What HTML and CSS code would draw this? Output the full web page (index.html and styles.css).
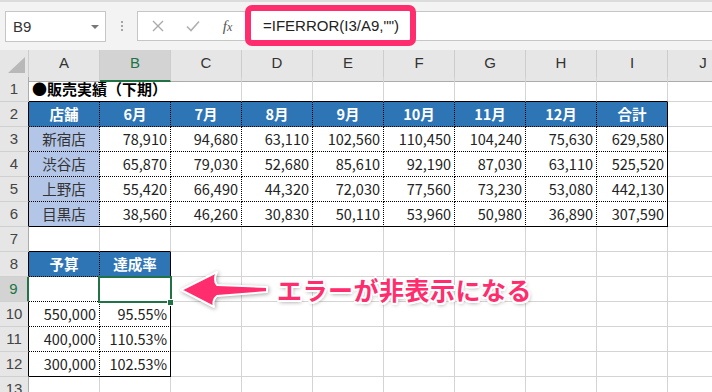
FILE: index.html
```html
<!DOCTYPE html>
<html>
  <head>
    <meta charset="utf-8" />
    <title>IFERROR</title>
    <link rel="stylesheet" href="styles.css">
  </head>

  <body>
    <!-- Formula bar -->
    <div class="toolbar">
      <div class="namebox"><span>B9</span><span class="caret"></span></div>
      <div class="grip"><i></i><i></i><i></i></div>
      <div class="formulabar">
        <span class="fbtn">
          <svg width="12" height="12" viewBox="0 0 12 12"><path d="M1 1L11 11M11 1L1 11" stroke="#aaa" stroke-width="1.4" fill="none"/></svg>
        </span>
        <span class="fbtn">
          <svg width="14" height="12" viewBox="0 0 14 12"><path d="M1 6.5L5 10.5L13 1.5" stroke="#b0b0b0" stroke-width="1.6" fill="none"/></svg>
        </span>
        <span class="fbtn fx"><i>f</i><i class="sub">x</i></span>
        <div class="formula">=IFERROR(I3/A9,"")</div>
      </div>
    </div>

    <!-- Sheet -->
    <div class="sheet">
      <div class="row colhead">
        <div class="corner">
          <svg width="28" height="26" viewBox="0 0 28 26"><polygon points="8,23 25,23 25,7" fill="#b8b8b8"/></svg>
        </div>
        <div class="ch">A</div>
        <div class="ch sel">B</div>
        <div class="ch">C</div>
        <div class="ch">D</div>
        <div class="ch">E</div>
        <div class="ch">F</div>
        <div class="ch">G</div>
        <div class="ch">H</div>
        <div class="ch">I</div>
        <div class="ch">J</div>
      </div>

      <div class="row">
        <div class="rh">1</div>
        <div class="c title tb">●販売実績（下期）</div>
        <div class="c tb"></div><div class="c tb"></div><div class="c tb"></div>
        <div class="c tb"></div><div class="c tb"></div><div class="c tb"></div>
        <div class="c"></div>
      </div>

      <div class="row">
        <div class="rh le">2</div>
        <div class="c hd dt">店舗</div>
        <div class="c hd dt">6月</div>
        <div class="c hd dt">7月</div>
        <div class="c hd dt">8月</div>
        <div class="c hd dt">9月</div>
        <div class="c hd dt">10月</div>
        <div class="c hd dt">11月</div>
        <div class="c hd dt">12月</div>
        <div class="c hd dt re">合計</div>
        <div class="c"></div>
      </div>

      <div class="row">
        <div class="rh le">3</div>
        <div class="c st dt">新宿店</div>
        <div class="c n dt">78,910</div>
        <div class="c n dt">94,680</div>
        <div class="c n dt">63,110</div>
        <div class="c n dt">102,560</div>
        <div class="c n dt">110,450</div>
        <div class="c n dt">104,240</div>
        <div class="c n dt">75,630</div>
        <div class="c n dt re">629,580</div>
        <div class="c"></div>
      </div>

      <div class="row">
        <div class="rh le">4</div>
        <div class="c st dt">渋谷店</div>
        <div class="c n dt">65,870</div>
        <div class="c n dt">79,030</div>
        <div class="c n dt">52,680</div>
        <div class="c n dt">85,610</div>
        <div class="c n dt">92,190</div>
        <div class="c n dt">87,030</div>
        <div class="c n dt">63,110</div>
        <div class="c n dt re">525,520</div>
        <div class="c"></div>
      </div>

      <div class="row">
        <div class="rh le">5</div>
        <div class="c st dt">上野店</div>
        <div class="c n dt">55,420</div>
        <div class="c n dt">66,490</div>
        <div class="c n dt">44,320</div>
        <div class="c n dt">72,030</div>
        <div class="c n dt">77,560</div>
        <div class="c n dt">73,230</div>
        <div class="c n dt">53,080</div>
        <div class="c n dt re">442,130</div>
        <div class="c"></div>
      </div>

      <div class="row">
        <div class="rh le">6</div>
        <div class="c st dt be">目黒店</div>
        <div class="c n dt be">38,560</div>
        <div class="c n dt be">46,260</div>
        <div class="c n dt be">30,830</div>
        <div class="c n dt be">50,110</div>
        <div class="c n dt be">53,960</div>
        <div class="c n dt be">50,980</div>
        <div class="c n dt be">36,890</div>
        <div class="c n dt re be">307,590</div>
        <div class="c"></div>
      </div>

      <div class="row">
        <div class="rh">7</div>
        <div class="c tb"></div><div class="c tb"></div>
        <div class="c"></div><div class="c"></div><div class="c"></div><div class="c"></div>
        <div class="c"></div><div class="c"></div><div class="c"></div><div class="c"></div>
      </div>

      <div class="row">
        <div class="rh le">8</div>
        <div class="c hd dt">予算</div>
        <div class="c hd dt re">達成率</div>
        <div class="c"></div><div class="c"></div><div class="c"></div><div class="c"></div>
        <div class="c"></div><div class="c"></div><div class="c"></div><div class="c"></div>
      </div>

      <div class="row">
        <div class="rh sel">9</div>
        <div class="c dt"></div>
        <div class="c dt re"></div>
        <div class="c"></div><div class="c"></div><div class="c"></div><div class="c"></div>
        <div class="c"></div><div class="c"></div><div class="c"></div><div class="c"></div>
      </div>

      <div class="row">
        <div class="rh le">10</div>
        <div class="c n dt">550,000</div>
        <div class="c n dt re">95.55%</div>
        <div class="c"></div><div class="c"></div><div class="c"></div><div class="c"></div>
        <div class="c"></div><div class="c"></div><div class="c"></div><div class="c"></div>
      </div>

      <div class="row">
        <div class="rh le">11</div>
        <div class="c n dt">400,000</div>
        <div class="c n dt re">110.53%</div>
        <div class="c"></div><div class="c"></div><div class="c"></div><div class="c"></div>
        <div class="c"></div><div class="c"></div><div class="c"></div><div class="c"></div>
      </div>

      <div class="row">
        <div class="rh le">12</div>
        <div class="c n dt be">300,000</div>
        <div class="c n dt re be">102.53%</div>
        <div class="c"></div><div class="c"></div><div class="c"></div><div class="c"></div>
        <div class="c"></div><div class="c"></div><div class="c"></div><div class="c"></div>
      </div>

      <div class="row">
        <div class="rh">13</div>
        <div class="c"></div><div class="c"></div><div class="c"></div><div class="c"></div><div class="c"></div>
        <div class="c"></div><div class="c"></div><div class="c"></div><div class="c"></div><div class="c"></div>
      </div>
    </div>

    <!-- Active cell B9 -->
    <div class="selection"><span class="handle"></span></div>

    <!-- Annotation -->
    <svg class="arrow" width="110" height="60" viewBox="170 260 110 60">
      <path d="M181 290 L217 272 Q213 280 217 285 L267 287 L267 292 L217 296 Q212 300 214 307 Z" fill="#ff2d6e" stroke="#fff" stroke-width="2" stroke-linejoin="round"/>
    </svg>
    <div class="callout">エラーが非表示になる</div>
  </body>
</html>
```

FILE: styles.css
```css
* {
  box-sizing: border-box;
}

body,
html {
  margin: 0;
  padding: 0;
}

body {
  width: 712px;
  height: 392px;
  overflow: hidden;
  background: #fff;
  font-family: "Noto Sans CJK JP", sans-serif;
  color: #222;
}

/* Formula bar */
.toolbar {
  height: 50px;
  display: flex;
  align-items: flex-start;
  padding: 9px 0 0 5px;
  background: #f3f3f3;
  border-top: 2px solid #dcdcdc;
}

.namebox {
  width: 101px;
  height: 31px;
  display: flex;
  align-items: center;
  justify-content: space-between;
  padding: 0 6px 0 7px;
  background: #fff;
  border: 1px solid #c6c6c6;
  font: 15px "Liberation Sans", sans-serif;
  color: #333;
}

.caret {
  width: 0;
  height: 0;
  border-left: 4px solid transparent;
  border-right: 4px solid transparent;
  border-top: 4px solid #777;
}

.grip {
  width: 31px;
  display: flex;
  flex-direction: column;
  align-items: center;
  gap: 2px;
  padding-top: 10px;
}

.grip i {
  width: 2px;
  height: 2px;
  background: #a5a5a5;
}

.formulabar {
  flex: 1;
  height: 30px;
  display: flex;
  padding-left: 2px;
  margin-right: -4px;
  background: #fff;
  border: 1px solid #c6c6c6;
}

.fbtn {
  width: 35px;
  display: flex;
  align-items: center;
  justify-content: center;
}

.fx {
  font: italic 15px "Liberation Serif", serif;
  color: #555;
}

.fx .sub {
  font-size: 12px;
  margin-top: 3px;
}

/* pink highlight round the formula */
.formula {
  width: 171px;
  margin: -7px 0 -6px;
  padding-left: 12px;
  position: relative;
  z-index: 1;
  background: #fff;
  border: 6px solid #ff2d6e;
  border-radius: 7px;
  font: 15px/29px "Liberation Sans", sans-serif;
  color: #222;
}

/* Sheet grid */
.row {
  display: grid;
  grid-template-columns: 29px repeat(10, 71px);
  height: 25px;
}

.colhead {
  height: 27px;
}

.corner,
.ch {
  background: #e6e6e6;
  border-right: 1px solid #cdcdcd;
  border-bottom: 1px solid #ababab;
}

.ch {
  text-align: center;
  font: 15px/26px "Liberation Sans", sans-serif;
  color: #333;
}

.ch.sel {
  background: #d3d3d3;
  border-bottom: 2px solid #217346;
  line-height: 25px;
  color: #217346;
}

.rh {
  background: #e6e6e6;
  border-right: 1px solid #ababab;
  border-bottom: 1px solid #d0d0d0;
  text-align: center;
  font: 15px/24px "Liberation Sans", sans-serif;
  color: #444;
}

.rh.le {
  border-right-color: #000;
}

.rh.sel {
  background: #d3d3d3;
  border-right: 2px solid #217346;
  color: #217346;
}

.c {
  padding: 0 3px;
  border-right: 1px solid #d4d4d4;
  border-bottom: 1px solid #d4d4d4;
  font-size: 14.5px;
  line-height: 24px;
  white-space: nowrap;
  overflow: hidden;
  color: #222;
}

.title {
  grid-column: span 3;
  font-size: 15px;
  font-weight: bold;
  color: #000;
}

.n {
  text-align: right;
}

.hd {
  background: #2e75b6;
  color: #fff;
  font-weight: bold;
  text-align: center;
}

.st {
  background: #b4c6e7;
  text-align: center;
  color: #333;
}

/* table borders: dotted inside, solid round the edge */
.dt {
  border-right: 1px dotted #000;
  border-bottom: 1px dotted #000;
}

.tb {
  border-bottom: 1px solid #000;
}

.re {
  border-right-style: solid;
}

.be {
  border-bottom-style: solid;
}

/* Active cell */
.selection {
  position: absolute;
  left: 98px;
  top: 276px;
  width: 74px;
  height: 27px;
  border: 2px solid #217346;
}

.handle {
  position: absolute;
  left: 67px;
  top: 21px;
  width: 7px;
  height: 7px;
  background: #217346;
  border: 1px solid #fff;
}

/* Annotation */
.arrow {
  position: absolute;
  left: 170px;
  top: 260px;
  filter: drop-shadow(1px 1px 2px rgba(0, 0, 0, 0.35));
}

.callout {
  position: absolute;
  left: 277px;
  top: 277px;
  font-size: 25px;
  font-weight: bold;
  line-height: 25px;
  letter-spacing: 0.5px;
  color: #ff2d6e;
  white-space: nowrap;
  text-shadow: 2px 0 #fff, -2px 0 #fff, 0 2px #fff, 0 -2px #fff,
    1.5px 1.5px #fff, -1.5px 1.5px #fff, 1.5px -1.5px #fff, -1.5px -1.5px #fff,
    1px 2px 4px rgba(0, 0, 0, 0.45);
}
```
